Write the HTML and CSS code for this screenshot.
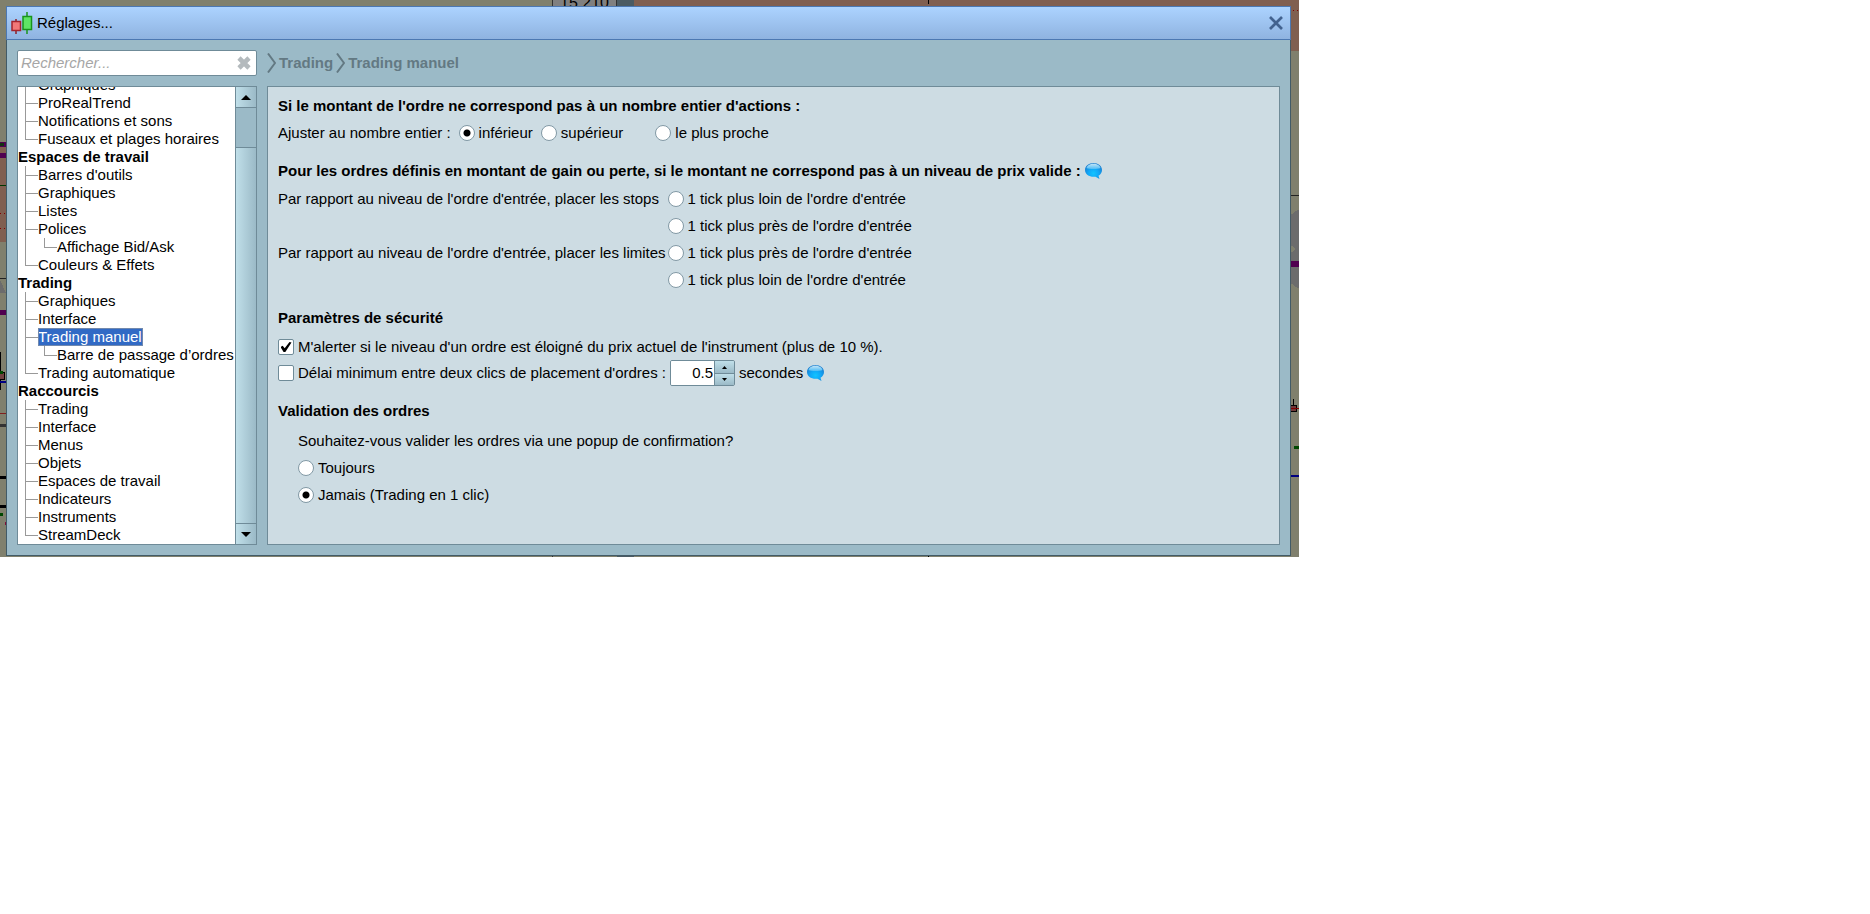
FILE: index.html
```html
<!DOCTYPE html>
<html lang="fr">
<head>
<meta charset="utf-8">
<title>Réglages...</title>
<link rel="stylesheet" href="styles.css">
</head>
<body>
<div class="desktop">
  <svg class="chart" width="1299" height="557" viewBox="0 0 1299 557" shape-rendering="crispEdges" aria-hidden="true">
    <rect width="1299" height="557" fill="#80806d"/>
    <rect y="146" width="8" height="96" fill="#805f50"/>
    <rect x="633" width="666" height="51" fill="#805f50"/>
    <rect x="552.5" y="-1" width="64" height="14" fill="#808080" stroke="#333"/>
    <rect x="617" width="17" height="8" fill="#4b5b63"/>
    <path d="M928.500 0V4M928.500 555V557" stroke="#000"/>
    <rect x="617" y="555" width="17" height="2" fill="#4b5b63"/>
    <rect x="552" y="555" width="1" height="2" fill="#333"/>
    <g fill="#500050">
      <rect y="142" width="8" height="5"/>
      <rect y="153" width="8" height="5"/>
      <rect y="310" width="8" height="5"/>
    </g>
    <rect y="143" width="4" height="3" fill="#123312"/>
    <rect y="185" width="8" height="1" fill="#003800"/>
    <path d="M0 213.500H8M1293 10.500H1299" stroke="#800000" stroke-dasharray="1 3"/>
    <path d="M0 228.500H8" stroke="#800000" stroke-dasharray="1 3"/>
    <path d="M0 280L6 293H0Z" fill="#6c6c6c"/>
    <path d="M0 278.500H8M1290 195.500H1299" stroke="#222"/>
    <path d="M0.500 352V390" stroke="#000"/>
    <rect x="-1" y="372" width="5" height="7" fill="#704040" stroke="#000"/>
    <rect y="371" width="3" height="3" fill="#004800"/>
    <rect y="381" width="6" height="2" fill="#000080"/>
    <rect y="413" width="8" height="1" fill="#802020"/>
    <rect y="424" width="8" height="3" fill="#333"/>
    <rect y="476" width="8" height="3"/>
    <rect y="505" width="8" height="3"/>
    <rect y="513" width="3" height="3" fill="#004800"/>
    <rect x="5" y="522" width="2" height="3" fill="#80103c"/>
    <circle cx="1307" cy="230" r="22" fill="#6c6c6c"/>
    <circle cx="1307" cy="268" r="22" fill="#6c6c6c"/>
    <rect x="1290" y="261" width="9" height="6" fill="#500050"/>
    <path d="M1293.500 399V405" stroke="#000"/>
    <rect x="1288" y="405" width="8" height="6" fill="#703838" stroke="#000"/>
    <rect x="1290" y="408" width="9" height="1" fill="#800000"/>
    <rect x="1294" y="446" width="5" height="3" fill="#004800"/>
    <rect x="1290" y="475" width="9" height="2" fill="#000080"/>
  </svg>
  <span class="price">15 210</span>

  <main class="window">
    <header class="titlebar">
      <svg class="logo" width="22" height="22" viewBox="0 0 22 22" aria-hidden="true">
        <path d="M5 7V22" stroke="#8e1f28" stroke-width="1.500"/>
        <rect x="1" y="9.500" width="8.500" height="9" fill="#f27878" stroke="#a3242e" stroke-width="1.500"/>
        <path d="M16 0V22" stroke="#18941c" stroke-width="1.500"/>
        <rect x="12" y="4.500" width="8.500" height="13" fill="#5fe465" stroke="#18941c" stroke-width="1.500"/>
      </svg>
      <h1 class="title">Réglages...</h1>
      <button class="close" type="button" aria-label="Fermer">
        <svg width="14" height="14" viewBox="0 0 14 14"><path d="M1 1L13 13M13 1L1 13" stroke="#42628f" stroke-width="2.700"/></svg>
      </button>
    </header>

    <div class="body">
      <aside class="sidebar">
        <div class="search">
          <input class="search-input" type="text" placeholder="Rechercher..." aria-label="Rechercher">
          <button class="clear" type="button" aria-label="Effacer">
            <svg width="14" height="14" viewBox="0 0 14 14"><path d="M2 2L12 12M12 2L2 12" stroke="#b4babd" stroke-width="4.600"/></svg>
          </button>
        </div>
        <div class="tree">
          <nav class="tree-view">
            <ul class="branch">
              <li>Graphiques</li>
              <li>ProRealTrend</li>
              <li>Notifications et sons</li>
              <li>Fuseaux et plages horaires</li>
            </ul>
            <h2 class="group">Espaces de travail</h2>
            <ul class="branch">
              <li>Barres d'outils</li>
              <li>Graphiques</li>
              <li>Listes</li>
              <li>Polices
                <ul class="branch"><li>Affichage Bid/Ask</li></ul>
              </li>
              <li>Couleurs &amp; Effets</li>
            </ul>
            <h2 class="group">Trading</h2>
            <ul class="branch">
              <li>Graphiques</li>
              <li>Interface</li>
              <li><span class="selected">Trading manuel</span>
                <ul class="branch"><li>Barre de passage d’ordres</li></ul>
              </li>
              <li>Trading automatique</li>
            </ul>
            <h2 class="group">Raccourcis</h2>
            <ul class="branch">
              <li>Trading</li>
              <li>Interface</li>
              <li>Menus</li>
              <li>Objets</li>
              <li>Espaces de travail</li>
              <li>Indicateurs</li>
              <li>Instruments</li>
              <li>StreamDeck</li>
            </ul>
          </nav>
          <div class="scrollbar">
            <button class="scroll-button up" type="button" aria-label="Monter"><svg width="10" height="5" viewBox="0 0 10 5"><path d="M5 0L10 5H0Z"/></svg></button>
            <div class="thumb"></div>
            <button class="scroll-button down" type="button" aria-label="Descendre"><svg width="10" height="5" viewBox="0 0 10 5"><path d="M0 0H10L5 5Z"/></svg></button>
          </div>
        </div>
      </aside>

      <section class="content">
        <nav class="crumbs">
          <svg width="9" height="20" viewBox="0 0 9 20"><path d="M1 0.500L8 10L1 19.500" fill="none" stroke="#637983" stroke-width="2"/></svg>
          <span>Trading</span>
          <svg width="9" height="20" viewBox="0 0 9 20"><path d="M1 0.500L8 10L1 19.500" fill="none" stroke="#637983" stroke-width="2"/></svg>
          <span>Trading manuel</span>
        </nav>

        <form class="panel">
          <h2 class="heading">Si le montant de l'ordre ne correspond pas à un nombre entier d'actions :</h2>
          <div class="row round">
            <span>Ajuster au nombre entier :</span>
            <label class="option"><input type="radio" name="round" checked>inférieur</label>
            <label class="option"><input type="radio" name="round">supérieur</label>
            <label class="option"><input type="radio" name="round">le plus proche</label>
          </div>

          <h2 class="heading spaced">Pour les ordres définis en montant de gain ou perte, si le montant ne correspond pas à un niveau de prix valide :
            <svg class="bubble" width="17" height="16" viewBox="0 0 17 16" aria-hidden="true">
              <defs>
                <radialGradient id="bubble-fill" cx="0.500" cy="0.650" r="0.600"><stop offset="0" stop-color="#12c4ff"/><stop offset="0.500" stop-color="#10a8f8"/><stop offset="1" stop-color="#1b7fd0"/></radialGradient>
                <linearGradient id="bubble-shine" x2="0" y2="1"><stop offset="0" stop-color="#c4e4f6"/><stop offset="1" stop-color="#4fbdf6"/></linearGradient>
              </defs>
              <path d="M8.500 0C13.200 0 17 3 17 7C17 9.400 15.700 11.500 13.500 12.700L14.500 16L10.500 13.700C5 14.600 0 11.500 0 7C0 3 3.800 0 8.500 0Z" fill="url(#bubble-fill)"/>
              <path d="M8.500 0.700C12 0.700 15 2.500 15.500 5C13 6.300 4 6.300 1.500 5C2 2.500 5 0.700 8.500 0.700Z" fill="url(#bubble-shine)"/>
            </svg>
          </h2>
          <div class="levels">
            <span>Par rapport au niveau de l'ordre d'entrée, placer les stops</span>
            <label class="option"><input type="radio" name="stops">1 tick plus loin de l'ordre d'entrée</label>
            <label class="option second"><input type="radio" name="stops">1 tick plus près de l'ordre d'entrée</label>
            <span>Par rapport au niveau de l'ordre d'entrée, placer les limites</span>
            <label class="option"><input type="radio" name="limits">1 tick plus près de l'ordre d'entrée</label>
            <label class="option second"><input type="radio" name="limits">1 tick plus loin de l'ordre d'entrée</label>
          </div>

          <h2 class="heading spaced">Paramètres de sécurité</h2>
          <label class="row check first-check"><input type="checkbox" checked>M'alerter si le niveau d'un ordre est éloigné du prix actuel de l'instrument (plus de 10 %).</label>
          <div class="row delay">
            <label class="check"><input type="checkbox">Délai minimum entre deux clics de placement d'ordres :</label>
            <div class="spinner">
              <input class="spin-value" type="text" value="0.5" aria-label="Délai en secondes">
              <div class="spin-buttons">
                <button type="button" aria-label="Augmenter"><svg width="5" height="3" viewBox="0 0 5 3"><path d="M2.500 0L5 3H0Z"/></svg></button>
                <button type="button" aria-label="Diminuer"><svg width="5" height="3" viewBox="0 0 5 3"><path d="M0 0H5L2.500 3Z"/></svg></button>
              </div>
            </div>
            <span>secondes</span>
            <svg class="bubble" width="17" height="16" viewBox="0 0 17 16" aria-hidden="true">
              <path d="M8.500 0C13.200 0 17 3 17 7C17 9.400 15.700 11.500 13.500 12.700L14.500 16L10.500 13.700C5 14.600 0 11.500 0 7C0 3 3.800 0 8.500 0Z" fill="url(#bubble-fill)"/>
              <path d="M8.500 0.700C12 0.700 15 2.500 15.500 5C13 6.300 4 6.300 1.500 5C2 2.500 5 0.700 8.500 0.700Z" fill="url(#bubble-shine)"/>
            </svg>
          </div>

          <h2 class="heading spaced">Validation des ordres</h2>
          <div class="confirm">
            <p class="question">Souhaitez-vous valider les ordres via une popup de confirmation?</p>
            <label class="option"><input type="radio" name="confirm">Toujours</label>
            <label class="option"><input type="radio" name="confirm" checked>Jamais (Trading en 1 clic)</label>
          </div>
        </form>
      </section>
    </div>
  </main>
</div>
</body>
</html>
```
FILE: styles.css
```css
* { box-sizing: border-box; }

body {
  margin: 0;
  background: #fff;
  color: #000;
  font: 15px/18px "Liberation Sans", Arial, sans-serif;
}

h1, h2, p, ul { margin: 0; padding: 0; }
ul { list-style: none; }
svg { display: block; flex: none; }
button { padding: 0; border: 0; background: none; }
input { font: inherit; margin: 0; }

.desktop {
  position: relative;
  max-width: 1299px;
  padding: 6px 8px 1px 6px;
  overflow: hidden;
  background: #80806d;
}
.chart { position: absolute; top: 0; left: 0; }
.price { position: absolute; top: -6px; left: 560px; font-size: 16px; }

.window {
  position: relative;
  border: 1px solid #425b67;
  border-top: 0;
  background: #9bbac7;
}
.titlebar {
  display: flex;
  align-items: center;
  gap: 4px;
  height: 34px;
  margin: 0 -1px;
  padding: 0 7px 0 4px;
  border: 1px solid #4c78b2;
  background: linear-gradient(#acd3ff, #8fb3e0);
}
.title { flex: 1; font-size: 15px; font-weight: normal; }

.body {
  display: grid;
  grid-template-columns: 240px 1fr;
  gap: 10px;
  padding: 10px;
}
.sidebar, .content { display: flex; flex-direction: column; gap: 10px; }

.search {
  display: flex;
  align-items: center;
  height: 26px;
  padding: 0 5px 0 3px;
  border: 1px solid #6f8b98;
  border-radius: 2px;
  background: #fff;
}
.search-input {
  flex: 1;
  min-width: 0;
  padding: 0;
  border: 0;
  background: none;
  font-style: italic;
}
.search-input::placeholder { color: #a6a6a6; opacity: 1; }

.tree {
  display: flex;
  height: 459px;
  border: 1px solid #6f8b98;
  background: #fff;
}
.tree-view {
  display: flex;
  flex: 1;
  flex-direction: column;
  justify-content: flex-end;
  overflow: hidden;
  white-space: nowrap;
}
.group { font-size: 15px; font-weight: bold; }
.branch { padding-left: 7px; }
.branch .branch { padding-left: 6px; }
.branch > li { position: relative; padding-left: 13px; }
.branch > li::before {
  content: "";
  position: absolute;
  top: 0;
  bottom: 0;
  left: 0;
  border-left: 1px solid #999;
}
.branch > li:last-child::before { bottom: auto; height: 9px; }
.branch > li::after {
  content: "";
  position: absolute;
  top: 9px;
  left: 0;
  width: 13px;
  border-top: 1px solid #999;
}
.selected {
  display: inline-block;
  padding-right: 1px;
  background: #316ac5;
  outline: 1px solid #7189ae;
  outline-offset: -1px;
  color: #fff;
}

.scrollbar {
  display: flex;
  flex-direction: column;
  width: 21px;
  border-left: 1px solid #6f8b98;
  background: #9bbac7;
}
.scroll-button {
  display: grid;
  place-items: center;
  height: 21px;
  background: linear-gradient(90deg, #c0dfe9, #9bbac7);
}
.up { border-bottom: 1px solid #6f8b98; }
.down { border-top: 1px solid #6f8b98; }
.thumb {
  flex: 1;
  margin-top: 39px;
  border-top: 1px solid #6f8b98;
  background: linear-gradient(90deg, #c0dfe9, #9bbac7);
}

.crumbs {
  display: flex;
  align-items: center;
  gap: 3px;
  height: 26px;
  color: #637983;
  font-weight: bold;
}

.panel {
  flex: 1;
  padding: 10px;
  border: 1px solid #6f8b98;
  background: #cddce3;
}
.heading { display: flex; align-items: center; gap: 4px; font-size: 15px; font-weight: bold; }
.spaced { margin-top: 16px; }
.row { display: flex; align-items: center; }
.round { height: 27px; margin-top: 4px; }
.round .option { margin-left: 8px; }
.round .option:last-child { margin-left: 32px; }
.option { display: flex; align-items: center; gap: 4px; height: 27px; }

input[type="radio"], input[type="checkbox"] {
  appearance: none;
  flex: none;
  width: 16px;
  height: 16px;
  border: 1px solid #8299a5;
  background: #fff;
}
input[type="radio"] { border-radius: 50%; }
input[type="radio"]:checked { background: radial-gradient(circle, #000 3px, #fff 4px); }
input[type="checkbox"] { display: grid; place-items: center; border-color: #6f8b98; border-radius: 2px; }
input[type="checkbox"]:checked::before {
  content: "";
  width: 11px;
  height: 10px;
  background: #000;
  clip-path: polygon(0 50%, 20% 38%, 38% 62%, 82% 0, 100% 5%, 44% 100%, 28% 100%);
}

.levels {
  display: grid;
  grid-template-columns: auto auto;
  justify-content: start;
  align-items: center;
  column-gap: 2px;
  margin-top: 5px;
  white-space: nowrap;
}
.second { grid-column: 2; }

.check { display: flex; align-items: center; gap: 4px; }
.first-check { height: 26px; margin-top: 7px; }
.delay { height: 26px; gap: 4px; }
.spinner {
  display: flex;
  width: 65px;
  height: 26px;
  overflow: hidden;
  border: 1px solid #6f8b98;
  border-radius: 2px;
}
.spin-value { flex: 1; min-width: 0; padding: 0 1px; border: 0; background: #fff; text-align: right; }
.spin-buttons { display: grid; flex: none; width: 20px; grid-template-rows: 1fr 1fr; border-left: 1px solid #6f8b98; }
.spin-buttons button { display: grid; place-items: center; background: linear-gradient(#c0dfe9, #9bbac7); }
.spin-buttons button + button { border-top: 1px solid #6f8b98; }

.confirm { padding-left: 20px; }
.question { margin: 12px 0 4px; }
```
